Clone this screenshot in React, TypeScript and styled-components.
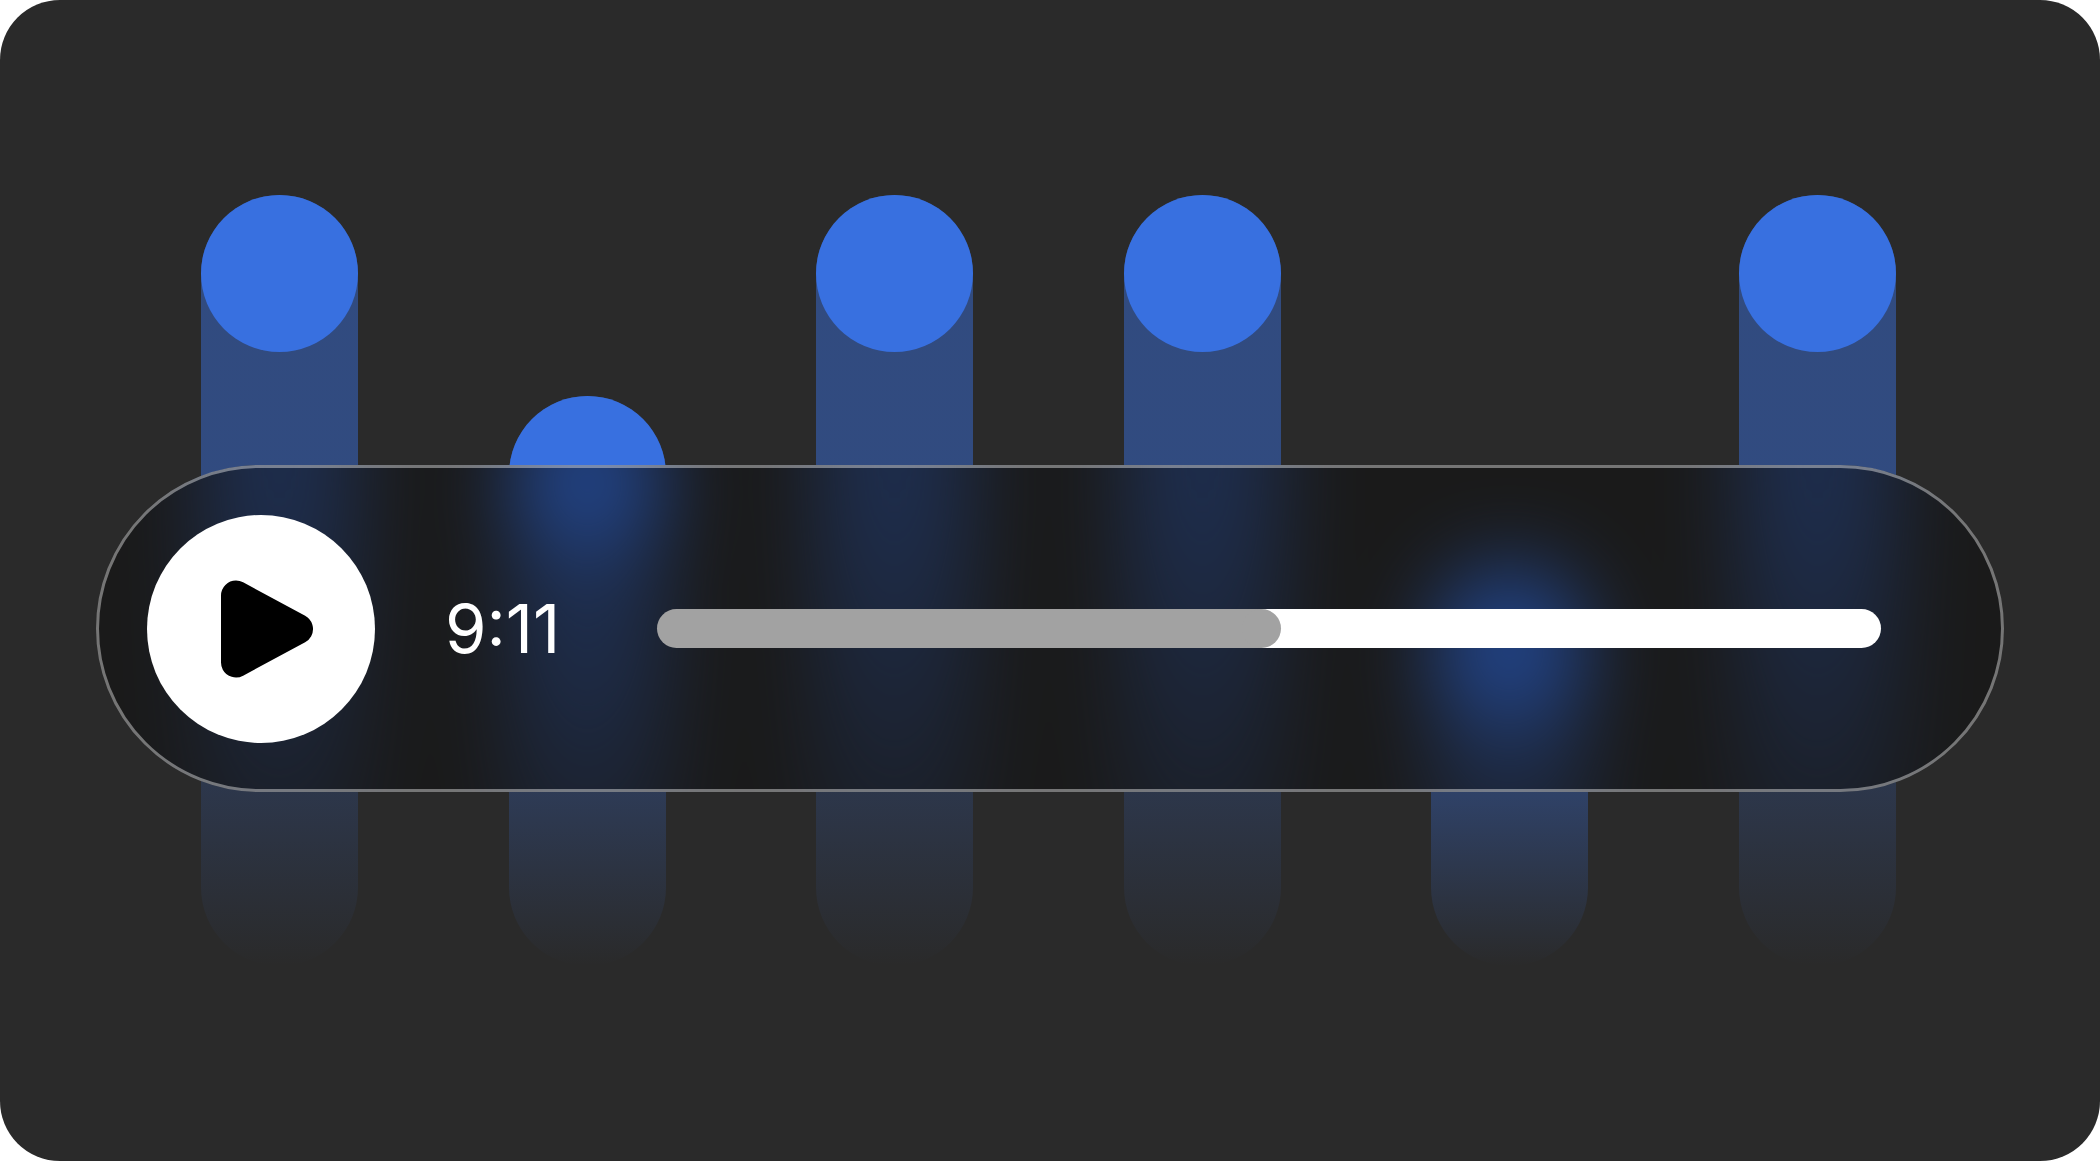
import React, { useState } from "react";
import styled, { createGlobalStyle } from "styled-components";

const GlobalStyle = createGlobalStyle`
  *, *::before, *::after { box-sizing: border-box; }
  body { margin: 0; background: #ffffff; }
`;

const Card = styled.main`
  display: grid;
  align-items: center;
  min-height: 100vh;
  border-radius: 60px;
  overflow: hidden;
  background: #2a2a2a;
  font-family: Inter, "Liberation Sans", sans-serif;
`;

const Bars = styled.div`
  grid-area: 1 / 1;
  display: flex;
  justify-content: space-between;
  align-items: flex-end;
  height: 771px;
  padding: 0 204px 0 201px;
`;

const Bar = styled.div<{ $height: number }>`
  width: 157px;
  height: ${(p) => p.$height}px;
  border-radius: 79px;
  background: linear-gradient(
    rgba(57, 112, 224, 0.47) 40%,
    rgba(57, 112, 224, 0)
  );
`;

const Cap = styled.div`
  aspect-ratio: 1;
  border-radius: 50%;
  background: #3870e0;
`;

/* Smoked glass behind the controls: the same bars, in the same place,
   dimmed and out of focus. */
const Glass = styled.div`
  grid-area: 1 / 1;
  display: flex;
  align-items: center;
  height: 327px;
  margin: 96px 96px 0;
  border-radius: 164px;
  overflow: hidden;
  background: #1a1a1a;

  ${Bars} {
    flex: 1;
    margin: -96px -96px 0;
    filter: blur(42px) brightness(0.59);
  }
`;

const Player = styled.section`
  grid-area: 1 / 1;
  z-index: 1;
  display: flex;
  align-items: center;
  gap: 70px;
  height: 327px;
  margin: 96px 96px 0;
  padding: 0 120px 0 48px;
  border: 3px solid rgba(255, 255, 255, 0.4);
  border-radius: 164px;
`;

const PlayButton = styled.button`
  flex: none;
  width: 228px;
  height: 228px;
  padding: 0;
  border: 0;
  border-radius: 50%;
  background: #ffffff;
  cursor: pointer;

  svg {
    display: block;
  }
`;

const Time = styled.time`
  flex: none;
  width: 142px;
  color: #ffffff;
  font-size: 67px;
  line-height: 80px;
`;

const Track = styled.input<{ $ratio: number }>`
  appearance: none;
  flex: 1;
  min-width: 0;
  height: 39px;
  margin: 0;
  border-radius: 20px;
  overflow: hidden;
  cursor: pointer;
  background: linear-gradient(
    to right,
    #a2a2a2 calc((100% - 39px) * ${(p) => p.$ratio} + 20px),
    #ffffff 0
  );

  &::-webkit-slider-thumb {
    appearance: none;
    width: 39px;
    height: 39px;
    border-radius: 50%;
    background: #a2a2a2;
  }
`;

const barHeights = [771, 570, 771, 771, 403, 771];
const duration = 1116;

function Equalizer() {
  return (
    <Bars aria-hidden="true">
      {barHeights.map((height, i) => (
        <Bar key={i} $height={height}>
          <Cap />
        </Bar>
      ))}
    </Bars>
  );
}

export default function App() {
  const [elapsed, setElapsed] = useState(551);
  const [playing, setPlaying] = useState(false);
  const minutes = Math.floor(elapsed / 60);
  const seconds = String(elapsed % 60).padStart(2, "0");

  return (
    <>
      <GlobalStyle />
      <Card>
        <Equalizer />
        <Glass>
          <Equalizer />
        </Glass>
        <Player aria-label="Audio player">
          <PlayButton
            type="button"
            aria-label={playing ? "Pause" : "Play"}
            onClick={() => setPlaying(!playing)}
          >
            <svg viewBox="0 0 228 228" width="228" height="228" aria-hidden="true">
              {playing ? (
                <path d="M84 70h20v88H84zM124 70h20v88h-20z" />
              ) : (
                <path
                  d="M89 80.5 151 114 89 147.5Z"
                  stroke="#000"
                  strokeWidth="30"
                  strokeLinejoin="round"
                />
              )}
            </svg>
          </PlayButton>
          <Time>{`${minutes}:${seconds}`}</Time>
          <Track
            type="range"
            aria-label="Position"
            min={0}
            max={duration}
            value={elapsed}
            $ratio={elapsed / duration}
            onChange={(e) => setElapsed(Number(e.target.value))}
          />
        </Player>
      </Card>
    </>
  );
}
